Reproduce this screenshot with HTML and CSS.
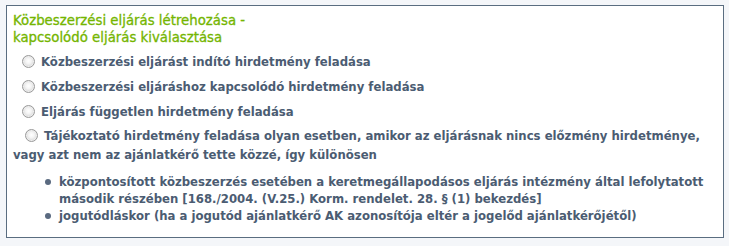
FILE: index.html
```html
<!DOCTYPE html>
<html lang="hu">
<head>
<meta charset="utf-8">
<title>Közbeszerzési eljárás létrehozása</title>
<link rel="stylesheet" href="styles.css">
</head>
<body>
<div class="box">
  <h1 class="title">Közbeszerzési eljárás létrehozása -<br>kapcsolódó eljárás kiválasztása</h1>
  <div class="options">
    <label class="opt"><span class="radio"></span>Közbeszerzési eljárást indító hirdetmény feladása</label>
    <label class="opt"><span class="radio"></span>Közbeszerzési eljáráshoz kapcsolódó hirdetmény feladása</label>
    <label class="opt"><span class="radio"></span>Eljárás független hirdetmény feladása</label>
    <p class="opt-long"><span class="radio"></span> Tájékoztató hirdetmény feladása olyan esetben, amikor az eljárásnak nincs előzmény hirdetménye, vagy azt nem az ajánlatkérő tette közzé, így különösen</p>
    <ul class="list">
      <li>központosított közbeszerzés esetében a keretmegállapodásos eljárás intézmény által lefolytatott második részében [168./2004. (V.25.) Korm. rendelet. 28. § (1) bekezdés]</li>
      <li>jogutódláskor (ha a jogutód ajánlatkérő AK azonosítója eltér a jogelőd ajánlatkérőjétől)</li>
    </ul>
  </div>
</div>
</body>
</html>
```

FILE: styles.css
```css
html, body {
  margin: 0;
  padding: 0;
  background: #f4f6f9;
}
body {
  padding: 5px 5px 8px 6px;
  font-family: "DejaVu Sans", Verdana, sans-serif;
}
.box {
  background: #ffffff;
  border: 1px solid #5a6d80;
  box-sizing: border-box;
  height: 233px;
  padding: 6px 6px 0 6px;
}
.title {
  margin: 0;
  font-size: 13.3px;
  font-weight: normal;
  line-height: 17px;
  color: #74b500;
  -webkit-text-stroke: 0.3px #74b500;
}
.options {
  margin-top: 3px;
  color: #4b5c72;
  font-size: 11.7px;
  font-weight: bold;
}
.opt {
  display: flex;
  align-items: center;
  gap: 6px;
  height: 25px;
  padding-left: 9px;
}
.radio {
  display: inline-block;
  width: 13px;
  height: 13px;
  box-sizing: border-box;
  border-radius: 50%;
  border: 1px solid #9a9a9a;
  background: radial-gradient(circle at 50% 45%, #ffffff 0, #f4f4f4 35%, #d4d4d4 75%, #c4c4c4 100%);
  box-shadow: inset 0 0 0 1px #eeeeee;
  flex: none;
}
.opt-long {
  margin: 0;
  padding: 3px 0 0 0;
  line-height: 19px;
  text-indent: 12px;
}
.opt-long .radio {
  vertical-align: -2px;
  margin-right: 2px;
}
.list {
  margin: 9px 0 0 0;
  padding: 0 0 0 46px;
  list-style: none;
  line-height: 17px;
}
.list li {
  position: relative;
}
.list li::before {
  content: "";
  position: absolute;
  left: -14px;
  top: 5px;
  width: 6px;
  height: 6px;
  border-radius: 50%;
  background: #5a6a80;
}
```
